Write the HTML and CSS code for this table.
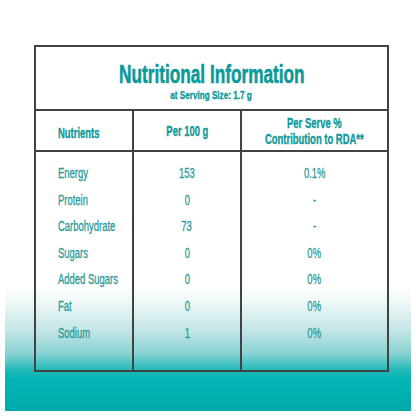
FILE: index.html
```html
<!DOCTYPE html>
<html>
<head>
<meta charset="utf-8">
<link rel="stylesheet" href="styles.css">
</head>
<body>
<div class="page">
  <div class="panel">
    <div class="title">
      <div class="heading"><span class="t">Nutritional Information</span></div>
      <div class="sub"><span class="t">at Serving Size: 1.7 g</span></div>
    </div>
    <div class="grid">
      <div class="col c1">
        <div class="hd"><span class="t">Nutrients</span></div>
        <div class="body left">
          <div class="row"><span class="t">Energy</span></div>
          <div class="row"><span class="t">Protein</span></div>
          <div class="row"><span class="t">Carbohydrate</span></div>
          <div class="row"><span class="t">Sugars</span></div>
          <div class="row"><span class="t">Added Sugars</span></div>
          <div class="row"><span class="t">Fat</span></div>
          <div class="row"><span class="t">Sodium</span></div>
        </div>
      </div>
      <div class="col c2">
        <div class="hd"><span class="t">Per 100 g</span></div>
        <div class="body">
          <div class="row"><span class="t">153</span></div>
          <div class="row"><span class="t">0</span></div>
          <div class="row"><span class="t">73</span></div>
          <div class="row"><span class="t">0</span></div>
          <div class="row"><span class="t">0</span></div>
          <div class="row"><span class="t">0</span></div>
          <div class="row"><span class="t">1</span></div>
        </div>
      </div>
      <div class="col c3">
        <div class="hd two">
          <span class="t">Per Serve %</span>
          <span class="t">Contribution to RDA**</span>
        </div>
        <div class="body">
          <div class="row"><span class="t">0.1%</span></div>
          <div class="row"><span class="t">-</span></div>
          <div class="row"><span class="t">-</span></div>
          <div class="row"><span class="t">0%</span></div>
          <div class="row"><span class="t">0%</span></div>
          <div class="row"><span class="t">0%</span></div>
          <div class="row"><span class="t">0%</span></div>
        </div>
      </div>
    </div>
  </div>
</div>
</body>
</html>
```
FILE: styles.css
```css
html, body {
  margin: 0;
  padding: 0;
  background: #fff;
}
.page {
  width: 406px;
  height: 411px;
  margin-left: 5px;
  box-sizing: border-box;
  padding: 45px 0 0 29px;
  background: linear-gradient(to bottom, #ffffff 0px, #ffffff 286px, #eef7f7 303px, #c4e6e6 330px, #86d1d1 354px, #22b9b9 370px, #03b4b4 380px, #00aaaa 411px);
  font-family: "Liberation Sans", Arial, sans-serif;
  color: #2e9c99;
}
.t {
  display: inline-block;
  white-space: nowrap;
  transform: scaleX(0.63);
  transform-origin: center;
  -webkit-text-stroke: 0.35px currentColor;
}
.panel {
  width: 355px;
  border: 2px solid #424242;
  box-sizing: border-box;
}
.title {
  height: 64px;
  border-bottom: 2px solid #424242;
  text-align: center;
  color: #0c9999;
  font-weight: bold;
  padding-top: 13px;
  box-sizing: border-box;
}
.heading {
  font-size: 26.5px;
  line-height: 28px;
}
.heading .t {
  transform: scaleX(0.65);
  -webkit-text-stroke: 0.6px currentColor;
}
.sub {
  font-size: 11px;
  line-height: 14px;
}
.sub .t {
  transform: scaleX(0.74);
}
.grid {
  display: grid;
  grid-template-columns: 98px 108px minmax(0, 1fr);
  height: 259px;
}
.col {
  display: flex;
  flex-direction: column;
  min-width: 0;
}
.c1, .c2 {
  border-right: 2px solid #424242;
}
.hd {
  height: 41px;
  box-sizing: border-box;
  border-bottom: 2px solid #424242;
  display: flex;
  flex-direction: column;
  align-items: center;
  justify-content: center;
  text-align: center;
  font-weight: bold;
  font-size: 15px;
  line-height: 15.5px;
  color: #0c9999;
  padding-top: 1px;
}
.hd.two {
  padding-top: 0;
}
.c1 .hd {
  align-items: flex-start;
  padding-left: 22px;
  padding-top: 5px;
}
.c1 .t {
  transform-origin: left center;
}
.body {
  padding-top: 8px;
  text-align: center;
  font-size: 15.5px;
}
.body.left {
  text-align: left;
  padding-left: 22px;
}
.body .t {
  transform: scaleX(0.61);
}
.body.left .t {
  transform-origin: left center;
}
.row {
  height: 26.6px;
  line-height: 26.6px;
}
```
